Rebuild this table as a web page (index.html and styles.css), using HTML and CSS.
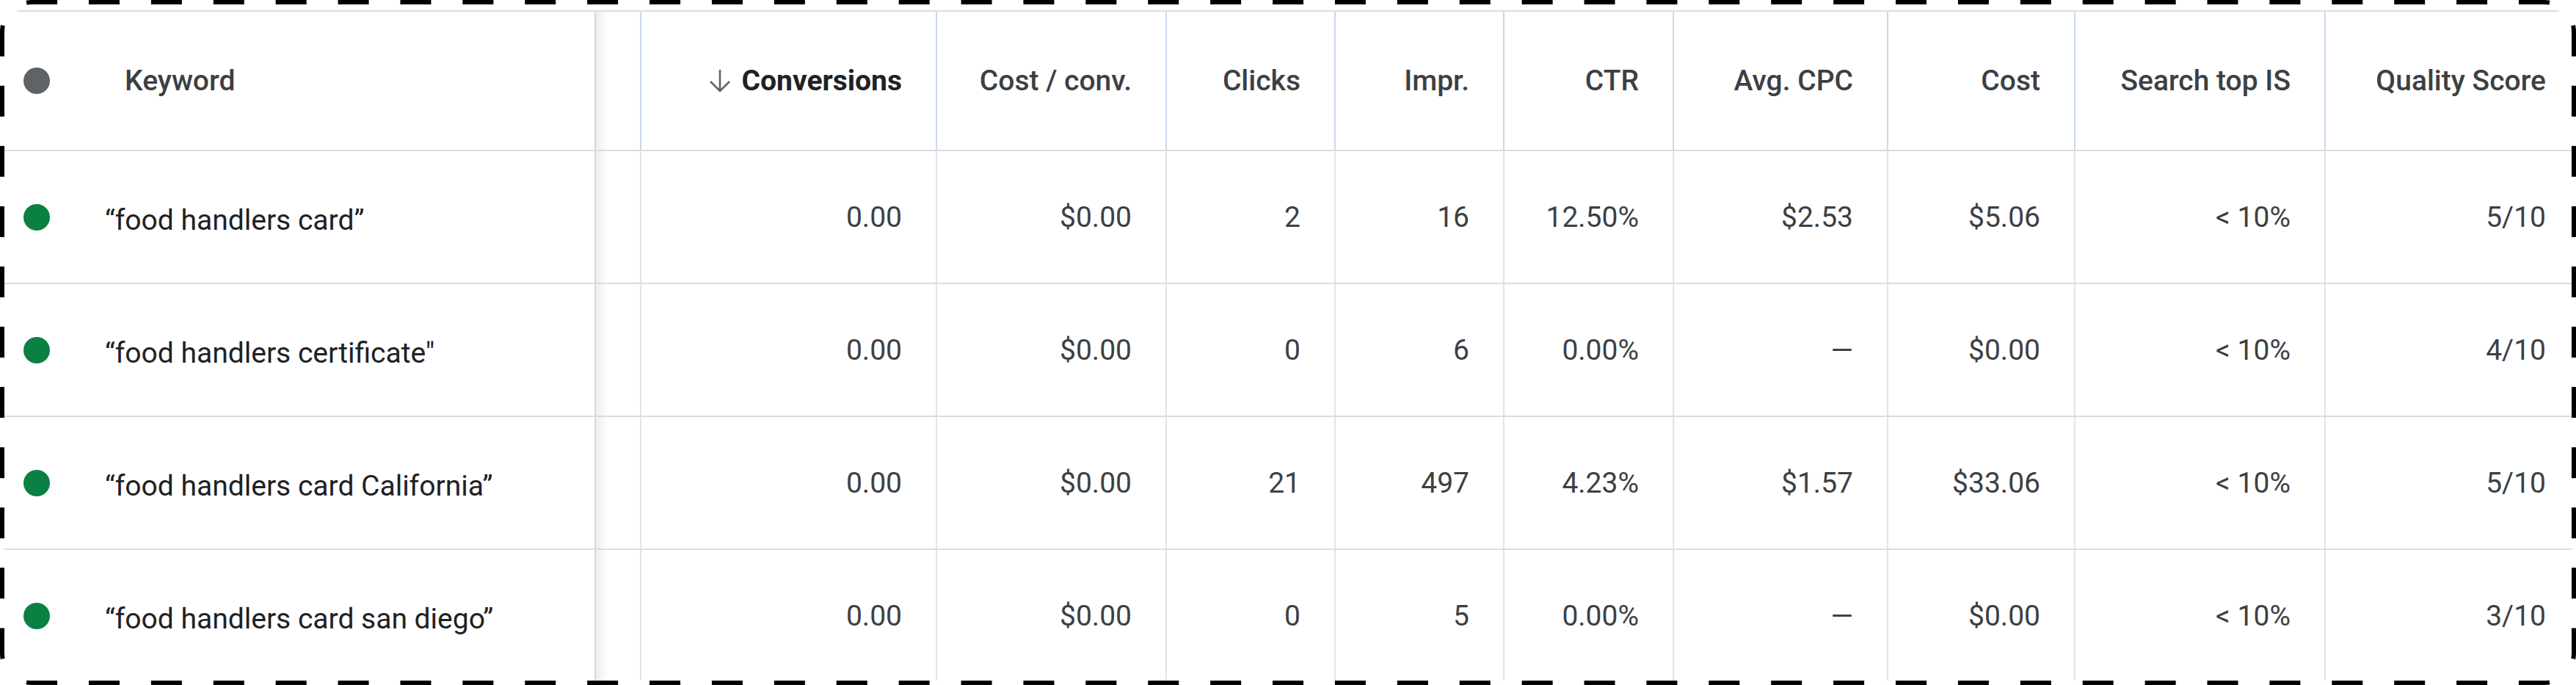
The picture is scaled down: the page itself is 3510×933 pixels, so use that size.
FILE: index.html
```html
<!DOCTYPE html>
<html lang="en">
<head>
<meta charset="utf-8">
<title>Keywords</title>
<link rel="stylesheet" href="styles.css">
</head>
<body>
<div class="page">
  <div class="frame">
    <div class="table">
      <div class="row head">
        <div class="cell kw"><span class="dot grey"></span><span class="kw-title">Keyword</span></div>
        <div class="cell gap"></div>
        <div class="cell sorted"><svg class="arrow" viewBox="0 0 34 34" width="34" height="34"><path d="M17 2 V31 M4 18 L17 31 L30 18" fill="none" stroke="#5f6368" stroke-width="2.6"/></svg><span>Conversions</span></div>
        <div class="cell">Cost / conv.</div>
        <div class="cell">Clicks</div>
        <div class="cell">Impr.</div>
        <div class="cell">CTR</div>
        <div class="cell">Avg. CPC</div>
        <div class="cell">Cost</div>
        <div class="cell">Search top IS</div>
        <div class="cell">Quality Score</div>
      </div>
      <div class="row">
        <div class="cell kw"><span class="dot green"></span><span class="kw-text">“food handlers card”</span></div>
        <div class="cell gap"></div>
        <div class="cell">0.00</div>
        <div class="cell">$0.00</div>
        <div class="cell">2</div>
        <div class="cell">16</div>
        <div class="cell">12.50%</div>
        <div class="cell">$2.53</div>
        <div class="cell">$5.06</div>
        <div class="cell">&lt; 10%</div>
        <div class="cell">5/10</div>
      </div>
      <div class="row">
        <div class="cell kw"><span class="dot green"></span><span class="kw-text">“food handlers certificate"</span></div>
        <div class="cell gap"></div>
        <div class="cell">0.00</div>
        <div class="cell">$0.00</div>
        <div class="cell">0</div>
        <div class="cell">6</div>
        <div class="cell">0.00%</div>
        <div class="cell">—</div>
        <div class="cell">$0.00</div>
        <div class="cell">&lt; 10%</div>
        <div class="cell">4/10</div>
      </div>
      <div class="row">
        <div class="cell kw"><span class="dot green"></span><span class="kw-text">“food handlers card California”</span></div>
        <div class="cell gap"></div>
        <div class="cell">0.00</div>
        <div class="cell">$0.00</div>
        <div class="cell">21</div>
        <div class="cell">497</div>
        <div class="cell">4.23%</div>
        <div class="cell">$1.57</div>
        <div class="cell">$33.06</div>
        <div class="cell">&lt; 10%</div>
        <div class="cell">5/10</div>
      </div>
      <div class="row">
        <div class="cell kw"><span class="dot green"></span><span class="kw-text">“food handlers card san diego”</span></div>
        <div class="cell gap"></div>
        <div class="cell">0.00</div>
        <div class="cell">$0.00</div>
        <div class="cell">0</div>
        <div class="cell">5</div>
        <div class="cell">0.00%</div>
        <div class="cell">—</div>
        <div class="cell">$0.00</div>
        <div class="cell">&lt; 10%</div>
        <div class="cell">3/10</div>
      </div>
    </div>
  </div>
  <svg class="dash" width="3510" height="933" viewBox="0 0 3510 933">
    <g fill="none" stroke="#000" stroke-width="6">
      <path class="dh" d="M14.72,14.72 A40,40 0 0 1 43,3 L3467,3 A40,40 0 0 1 3495.28,14.72"/>
      <path class="dh" d="M14.72,918.28 A40,40 0 0 0 43,930 L3467,930 A40,40 0 0 0 3495.28,918.28"/>
      <path class="dv" d="M14.72,14.72 A40,40 0 0 0 3,43 L3,890 A40,40 0 0 0 14.72,918.28"/>
      <path class="dv" d="M3495.28,14.72 A40,40 0 0 1 3507,43 L3507,890 A40,40 0 0 1 3495.28,918.28"/>
    </g>
  </svg>
</div>
</body>
</html>
```

FILE: styles.css
```css
html, body {
  margin: 0;
  padding: 0;
  background: #ffffff;
}

.page {
  position: relative;
  width: 3510px;
  height: 933px;
  overflow: hidden;
  font-family: Roboto, "Noto Sans", Arial, sans-serif;
}

.frame {
  margin: 6px;
  height: 921px;
  border-radius: 44px;
  overflow: hidden;
  background: #ffffff;
}

.table {
  margin-top: 8px;
  width: 3511px;
  border-top: 2px solid #dadce0;
}

.row {
  display: grid;
  grid-template-columns: 806px 62px 403px 313px 230px 230px 231px 292px 255px 341px 348px;
  height: 181px;
  border-bottom: 2px solid #dadce0;
  box-sizing: border-box;
}

.row.head {
  height: 190px;
}

.cell {
  display: flex;
  align-items: center;
  justify-content: flex-end;
  padding-right: 46px;
  border-right: 2px solid #e3e4e7;
  font-size: 39px;
  color: #3c4043;
  white-space: nowrap;
  box-sizing: border-box;
}

.head .cell {
  border-right-color: #c9d8ee;
  font-weight: 500;
  color: #3c4043;
}

.cell.kw {
  justify-content: flex-start;
  padding-left: 26px;
  padding-right: 0;
  border-right-color: #d7d9dd;
}

.head .cell.kw {
  border-right-color: #c9d8ee;
}

.cell.gap {
  padding: 0;
  background: linear-gradient(to right, rgba(0, 0, 0, 0.07), rgba(0, 0, 0, 0) 16px);
}

.dot {
  width: 36px;
  height: 36px;
  border-radius: 50%;
  flex: none;
}

.dot.grey {
  background: #5f6368;
}

.dot.green {
  background: #0b8043;
}

.kw-title {
  margin-left: 102px;
}

.kw-text {
  margin-left: 75px;
  padding-top: 8px;
  color: #202124;
}

.cell.sorted {
  font-weight: 700;
  color: #202124;
}

.arrow {
  margin-right: 13px;
  flex: none;
}

.dash {
  position: absolute;
  top: 0;
  left: 0;
  pointer-events: none;
}

.dh {
  stroke-dasharray: 42 42.9;
  stroke-dashoffset: -24.4;
}

.dv {
  stroke-dasharray: 42 40.08;
  stroke-dashoffset: -23;
}
```
